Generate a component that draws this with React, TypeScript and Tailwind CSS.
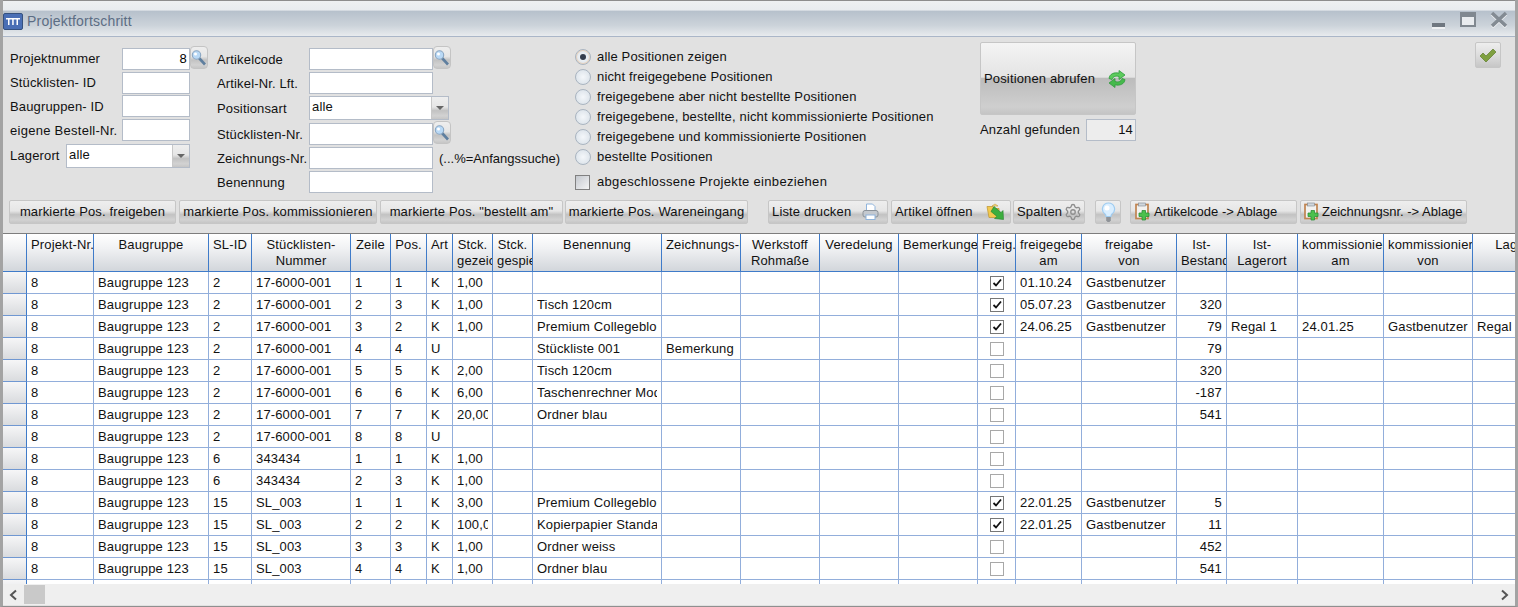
import { Settings } from 'lucide-react';

const font = 'font-["Liberation_Sans",Arial,sans-serif]';
const btnBg = 'bg-[linear-gradient(#eeeeee,#e6e6e6_45%,#c2c2c2_62%,#d2d2d2_85%,#c6c6c6)]';
const cols =
  'grid-cols-[24px_67px_115px_43px_99px_40px_36px_26px_40px_40px_129px_79px_79px_79px_79px_38px_66px_95px_50px_71px_86px_89px_95px]';

const headers = [
  '', 'Projekt-Nr.', 'Baugruppe', 'SL-ID', 'Stücklisten-\nNummer', 'Zeile', 'Pos.', 'Art', 'Stck.\ngezeichnet', 'Stck.\ngespielt',
  'Benennung', 'Zeichnungs-Nr.', 'Werkstoff\nRohmaße', 'Veredelung', 'Bemerkungen', 'Freig.', 'freigegeben\nam', 'freigabe\nvon',
  'Ist-\nBestand', 'Ist-\nLagerort', 'kommissioniert\nam', 'kommissioniert\nvon', 'Lagerort',
];

type Row = {
  sl: string; nr: string; z: string; p: string; art: string; st?: string; ben?: string; zn?: string;
  fr?: boolean; am?: string; von?: string; ist?: string; ort?: string; kam?: string; kvon?: string; lag?: string;
};

const g = 'Gastbenutzer';
const rows: Row[] = [
  { sl: '2', nr: '17-6000-001', z: '1', p: '1', art: 'K', st: '1,00', fr: true, am: '01.10.24', von: g },
  { sl: '2', nr: '17-6000-001', z: '2', p: '3', art: 'K', st: '1,00', ben: 'Tisch 120cm', fr: true, am: '05.07.23', von: g, ist: '320' },
  { sl: '2', nr: '17-6000-001', z: '3', p: '2', art: 'K', st: '1,00', ben: 'Premium Collegeblock', fr: true, am: '24.06.25', von: g, ist: '79', ort: 'Regal 1', kam: '24.01.25', kvon: g, lag: 'Regal 1' },
  { sl: '2', nr: '17-6000-001', z: '4', p: '4', art: 'U', ben: 'Stückliste 001', zn: 'Bemerkung', ist: '79' },
  { sl: '2', nr: '17-6000-001', z: '5', p: '5', art: 'K', st: '2,00', ben: 'Tisch 120cm', ist: '320' },
  { sl: '2', nr: '17-6000-001', z: '6', p: '6', art: 'K', st: '6,00', ben: 'Taschenrechner Modell', ist: '-187' },
  { sl: '2', nr: '17-6000-001', z: '7', p: '7', art: 'K', st: '20,00', ben: 'Ordner blau', ist: '541' },
  { sl: '2', nr: '17-6000-001', z: '8', p: '8', art: 'U' },
  { sl: '6', nr: '343434', z: '1', p: '1', art: 'K', st: '1,00' },
  { sl: '6', nr: '343434', z: '2', p: '3', art: 'K', st: '1,00' },
  { sl: '15', nr: 'SL_003', z: '1', p: '1', art: 'K', st: '3,00', ben: 'Premium Collegeblock', fr: true, am: '22.01.25', von: g, ist: '5' },
  { sl: '15', nr: 'SL_003', z: '2', p: '2', art: 'K', st: '100,00', ben: 'Kopierpapier Standard', fr: true, am: '22.01.25', von: g, ist: '11' },
  { sl: '15', nr: 'SL_003', z: '3', p: '3', art: 'K', st: '1,00', ben: 'Ordner weiss', ist: '452' },
  { sl: '15', nr: 'SL_003', z: '4', p: '4', art: 'K', st: '1,00', ben: 'Ordner blau', ist: '541' },
];

const Magnifier = () => (
  <svg width="16" height="18" viewBox="0 0 16 18">
    <line x1="8" y1="9" x2="14" y2="15.500" stroke="#5f7f9f" strokeWidth="2.6" />
    <circle cx="5.500" cy="6" r="4.200" fill="#b9d9f6" stroke="#8aa6c2" strokeWidth="1.100" />
    <circle cx="4.500" cy="5" r="1.500" fill="#ffffff" />
  </svg>
);

const SearchBtn = () => (
  <div className={`flex h-[23px] w-[18px] shrink-0 -translate-y-px items-center justify-center rounded-sm border border-[#c4c4c4] ${btnBg}`}>
    <Magnifier />
  </div>
);

const Input = ({ w, value, right }: { w: string; value?: string; right?: boolean }) => (
  <div className={`h-[22px] ${w} shrink-0 border border-[#b4bcc8] bg-white px-[2px] text-[13px] leading-[20px] text-black ${right ? 'text-right' : ''}`}>
    {value}
  </div>
);

const Combo = ({ w, value }: { w: string; value: string }) => (
  <div className={`flex h-[24px] ${w} shrink-0 border border-[#b4bcc8] bg-white`}>
    <div className="flex-1 px-[2px] text-[13px] leading-[20px]">{value}</div>
    <div className={`flex w-[17px] items-center justify-center border-l border-[#c8c8c8] ${btnBg}`}>
      <svg width="8" height="5" viewBox="0 0 8 5"><path d="M0 0h8L4 4z" fill="#666666" /></svg>
    </div>
  </div>
);

const Radio = ({ on, label }: { on?: boolean; label: string }) => (
  <div className="flex h-5 items-center">
    <div className={`flex h-4 w-4 items-center justify-center rounded-full border border-[#a9b4c0] bg-[radial-gradient(#f4f7fa,#d6dee6)] ${on ? 'ring-1 ring-[#e9d3bd] ring-inset' : ''}`}>
      {on && <div className="h-[6px] w-[6px] rounded-full bg-[#333c4c]" />}
    </div>
    <span className="ml-[6px]">{label}</span>
  </div>
);

const Btn = ({ w, className, children }: { w: string; className?: string; children: React.ReactNode }) => (
  <div className={`flex h-6 ${w} shrink-0 items-center whitespace-nowrap rounded-[2px] border border-[#c6c6c6] text-[13px] ${btnBg} ${className ?? ''}`}>
    {children}
  </div>
);

const Refresh = () => (
  <svg width="20" height="20" viewBox="0 0 20 20" className="ml-[12px] shrink-0">
    <path d="M2 9.500C2.500 5 7 3 12 4.200V1.500l6 4.500-6 4.500V7.500C8.500 6.500 6 7.500 5 10.500z" fill="#5ccb5c" stroke="#2f9a3c" strokeWidth="0.8" />
    <path d="M18 10.500C17.500 15 13 17 8 15.800v2.700l-6-4.500 6-4.500v3c3.500 1 6 0 7-3z" fill="#46b94c" stroke="#2f9a3c" strokeWidth="0.8" />
  </svg>
);

const Printer = () => (
  <svg width="17" height="18" viewBox="0 0 17 18" className="shrink-0">
    <path d="M4.500 1h6l2.500 2.500V8H4.500z" fill="#ffffff" stroke="#8fb4dc" />
    <rect x="1" y="7.500" width="15" height="6.500" rx="2" fill="#c4c9cf" stroke="#8b9299" />
    <rect x="4" y="12" width="9" height="4.500" fill="#ffffff" stroke="#8fb4dc" />
  </svg>
);

const FolderArrow = () => (
  <svg width="19" height="18" viewBox="0 0 19 18" className="shrink-0">
    <path d="M1 3.500h6l1 2h5v9H3z" fill="#f2c94e" stroke="#c29a3a" strokeWidth="0.8" />
    <path d="M6 3l3-2 3 2z" fill="#f6dd8a" stroke="#c29a3a" strokeWidth="0.6" />
    <path d="M8 3.500l7 6 2-2 .500 9-9-1 2.500-2-6-5z" fill="#3cae3e" stroke="#237f2c" strokeWidth="0.6" />
  </svg>
);

const Bulb = () => (
  <svg width="15" height="21" viewBox="0 0 15 21">
    <path d="M7.500 1a6 6 0 0 1 3.500 10.900c-.800.600-1 1.600-1 2.600H5c0-1-.200-2-1-2.600A6 6 0 0 1 7.500 1z" fill="#d9eeff" stroke="#9fccf0" strokeWidth="1.200" />
    <circle cx="6" cy="6" r="2.500" fill="#ffffff" />
    <path d="M5.200 15h4.600v3.500l-1.300 1.500h-2L5.200 18.500z" fill="#8f9398" />
  </svg>
);

const ClipPlus = () => (
  <svg width="17" height="20" viewBox="0 0 17 20" className="shrink-0">
    <rect x="1" y="2.500" width="12" height="14" fill="#f2f2f0" stroke="#c08450" strokeWidth="1.700" />
    <rect x="3.500" y="1" width="7" height="3" fill="#cfd6dc" stroke="#7f8790" strokeWidth="0.600" />
    <path d="M7 8.500h3.500V11H14v3.500h-3.500V18H7v-3.500H4V11h3z" fill="#4cc04c" stroke="#2f8f38" strokeWidth="0.800" />
  </svg>
);

const HeaderCell = ({ text }: { text: string }) => (
  <div className="h-full overflow-hidden border-r border-[#3f7bc9] bg-[linear-gradient(#ffffff,#f0f1f3_40%,#d2d6db)] pt-[3px]">
    {text.split('\n').map((line, i) => (
      <div key={i} className="w-max min-w-full whitespace-pre px-[4px] text-center leading-[16px]">
        {line}
      </div>
    ))}
  </div>
);

const Cell = ({ value, right }: { value?: string; right?: boolean }) => (
  <div className="h-full border-r border-b border-[#92aedb] pl-[4px] pr-[4px] leading-[21px]">
    <div className={`overflow-hidden whitespace-nowrap ${right ? 'text-right' : ''}`}>{value}</div>
  </div>
);

const Check = ({ on }: { on?: boolean }) => (
  <div className="flex h-full items-center justify-center border-r border-b border-[#92aedb]">
    <div className={`flex h-[14px] w-[14px] items-center justify-center bg-white border ${on ? 'border-[#777777]' : 'border-[#a8a8a8]'}`}>
      {on && (
        <svg width="10" height="10" viewBox="0 0 10 10">
          <path d="M1.500 5l2.500 2.500 5-6" fill="none" stroke="#111111" strokeWidth="1.800" />
        </svg>
      )}
    </div>
  </div>
);

const DataRow = ({ r }: { r?: Row }) => (
  <div className={`grid h-[22px] ${cols}`}>
    <div className="h-full border-r border-b border-r-[#3f7bc9] border-b-[#6f97d2] bg-[linear-gradient(#f6f6f7,#d9dbde)]" />
    <Cell value={r ? '8' : ''} />
    <Cell value={r ? 'Baugruppe 123' : ''} />
    <Cell value={r?.sl} />
    <Cell value={r?.nr} />
    <Cell value={r?.z} />
    <Cell value={r?.p} />
    <Cell value={r?.art} />
    <Cell value={r?.st} />
    <Cell />
    <Cell value={r?.ben} />
    <Cell value={r?.zn} />
    <Cell />
    <Cell />
    <Cell />
    {r ? <Check on={r.fr} /> : <Cell />}
    <Cell value={r?.am} />
    <Cell value={r?.von} />
    <Cell value={r?.ist} right />
    <Cell value={r?.ort} />
    <Cell value={r?.kam} />
    <Cell value={r?.kvon} />
    <Cell value={r?.lag} />
  </div>
);

export default function App() {
  return (
    <div className={`flex h-[607px] w-[1518px] flex-col overflow-hidden border-x-[3px] border-b border-x-[#a3a3a3] border-b-[#8f8f8f] bg-[#e1e1e1] text-[13px] tracking-[0.15px] text-[#111111] ${font}`}>
      {/* title bar */}
      <div className="-mx-[3px] flex h-[37px] shrink-0 items-center border-t border-b border-t-[#8d8d8d] border-b-[#aab6c8] bg-[linear-gradient(#eef0f2,#e9ecef_25%,#b7c1cc_30%,#ccd3da_70%,#e8ebee)] pt-[6px] pl-[3px] pr-[10px]">
        <svg width="20" height="17" viewBox="0 0 20 17" className="shrink-0">
          <rect x="0.500" y="0.500" width="19" height="16" rx="1.500" fill="#4a6fb5" stroke="#35517f" />
          <path d="M3 5h14v1.500H3zM5 6.500h1.500V12H5zM9.200 6.500h1.500V12H9.200zM13.500 6.500H15V12h-1.500z" fill="#ffffff" />
        </svg>
        <span className="ml-[4px] text-[14px] tracking-[0.2px] text-[#5c6d84]">Projektfortschritt</span>
        <div className="ml-auto flex items-center">
          <div className="mt-[8px] flex h-[6px] w-[13px] flex-col">
            <div className="h-[4px] bg-[#6f7780]" />
            <div className="h-[2px] bg-[#eef0f2]" />
          </div>
          <div className="ml-[15px] -translate-y-[2px] h-[15px] w-[16px] border-2 border-t-[5px] border-[#808890] bg-[#e9ecef]" />
          <svg width="18" height="17" viewBox="0 0 18 17" className="ml-[14px] -translate-y-[2px]">
            <path d="M2 2l14 13M16 2L2 15" stroke="#f0f2f4" strokeWidth="3.600" transform="translate(0 1)" />
            <path d="M2 2l14 13M16 2L2 15" stroke="#838b93" strokeWidth="3.600" />
          </svg>
        </div>
      </div>

      {/* filter form */}
      <div className="flex h-[164px] shrink-0 pl-[7px] pt-[5px]">
        <div className="w-[207px] shrink-0 pt-[5px]">
          <div className="flex items-center">
            <span className="w-[112px]">Projektnummer</span>
            <Input w="w-[68px]" value="8" right />
            <SearchBtn />
          </div>
          <div className="mt-[2px] flex items-center">
            <span className="w-[112px]">Stücklisten- ID</span>
            <Input w="w-[68px]" />
          </div>
          <div className="mt-px flex items-center">
            <span className="w-[112px] pt-[2px]">Baugruppen- ID</span>
            <Input w="w-[68px]" />
          </div>
          <div className="mt-[2px] flex items-center">
            <span className="w-[112px] pt-[2px] tracking-[0.27px]">eigene Bestell-Nr.</span>
            <Input w="w-[68px]" />
          </div>
          <div className="mt-[3px] flex items-center">
            <span className="w-[56px]">Lagerort</span>
            <Combo w="w-[124px]" value="alle" />
          </div>
        </div>

        <div className="w-[358px] shrink-0 pt-[5px]">
          <div className="flex items-center">
            <span className="w-[92px] pt-[2px]">Artikelcode</span>
            <Input w="w-[124px]" />
            <SearchBtn />
          </div>
          <div className="mt-[2px] flex items-center">
            <span className="w-[92px] pt-[2px]">Artikel-Nr. Lft.</span>
            <Input w="w-[124px]" />
          </div>
          <div className="mt-[2px] flex items-center">
            <span className="w-[92px] pt-[2px]">Positionsart</span>
            <Combo w="w-[140px]" value="alle" />
          </div>
          <div className="mt-[2px] flex items-center">
            <span className="w-[92px] pt-[2px]">Stücklisten-Nr.</span>
            <Input w="w-[124px]" />
            <SearchBtn />
          </div>
          <div className="mt-[2px] flex items-center">
            <span className="w-[92px] pt-[2px]">Zeichnungs-Nr.</span>
            <Input w="w-[124px]" />
            <span className="ml-[6px] pt-[2px] tracking-normal">(...%=Anfangssuche)</span>
          </div>
          <div className="mt-[2px] flex items-center">
            <span className="w-[92px] pt-[2px]">Benennung</span>
            <Input w="w-[124px]" />
          </div>
        </div>

        <div className="w-[405px] shrink-0 pt-[5px]">
          <Radio on label="alle Positionen zeigen" />
          <Radio label="nicht freigegebene Positionen" />
          <Radio label="freigegebene aber nicht bestellte Positionen" />
          <Radio label="freigegebene, bestellte, nicht kommissionierte Positionen" />
          <Radio label="freigegebene und kommissionierte Positionen" />
          <Radio label="bestellte Positionen" />
          <div className="mt-[5px] flex h-5 items-center">
            <div className="h-[15px] w-[15px] border border-[#808080] bg-[linear-gradient(135deg,#c4c8ce,#f4f4f4)] p-[1px]" />
            <span className="ml-[7px] tracking-[0.32px]">abgeschlossene Projekte einbeziehen</span>
          </div>
        </div>

        <div className="w-[156px] shrink-0">
          <div className="flex h-[73px] items-center rounded-[2px] border border-[#c6c6c6] bg-[linear-gradient(#f4f4f4,#e4e4e4_48%,#bcbcbc_50%,#cfcfcf_90%,#c4c4c4)] pl-[3px]">
            Positionen abrufen
            <Refresh />
          </div>
          <div className="mt-[4px] flex items-center justify-between">
            <span>Anzahl gefunden</span>
            <div className="h-[22px] w-[50px] border border-[#b4bcc8] bg-[#ededed] pr-[2px] text-right leading-[20px]">14</div>
          </div>
        </div>

        <div className="flex-1">
          <div className="ml-auto mr-[14px] flex h-[26px] w-[26px] items-center justify-center rounded-[2px] border border-[#c6c6c6] bg-[linear-gradient(#eeeeee,#dddddd_50%,#c6c6c6)]">
            <svg width="18" height="15" viewBox="0 0 18 15">
              <path d="M1 8l3-3 3 3 7-7 3 3-10 10z" fill="#7fa040" stroke="#5e7c2c" strokeWidth="0.700" />
            </svg>
          </div>
        </div>
      </div>

      {/* action buttons */}
      <div className="flex h-6 shrink-0 -translate-y-px pl-[6px]">
        <Btn w="w-[167px]" className="justify-center">markierte Pos. freigeben</Btn>
        <Btn w="w-[198px]" className="ml-[3px] justify-center">markierte Pos. kommissionieren</Btn>
        <Btn w="w-[183px]" className="ml-[3px] justify-center">markierte Pos. "bestellt am"</Btn>
        <Btn w="w-[183px]" className="ml-[2px] justify-center">markierte Pos. Wareneingang</Btn>
        <Btn w="w-[120px]" className="ml-[20px] gap-[11px] pl-[3px]">Liste drucken <Printer /></Btn>
        <Btn w="w-[120px]" className="ml-[3px] gap-[13px] pl-[3px]">Artikel öffnen <FolderArrow /></Btn>
        <Btn w="w-[72px]" className="ml-[2px] gap-[2px] pl-[3px]">Spalten <Settings size={18} strokeWidth={1.800} className="shrink-0 text-[#8e8e8e]" /></Btn>
        <Btn w="w-[26px]" className="ml-[10px] justify-center"><Bulb /></Btn>
        <Btn w="w-[167px]" className="ml-[9px] gap-[2px] pl-[4px] tracking-normal"><ClipPlus /> Artikelcode -&gt; Ablage</Btn>
        <Btn w="w-[167px]" className="ml-[3px] gap-[1px] pl-[3px] tracking-normal"><ClipPlus /> Zeichnungsnr. -&gt; Ablage</Btn>
      </div>

      {/* table */}
      <div className="mt-[8px] h-[351px] shrink-0 overflow-hidden border-t border-[#7d7d7d] bg-white">
        <div className={`grid h-[38px] border-b border-[#3f7bc9] ${cols}`}>
          {headers.map((h, i) => (
            <HeaderCell key={i} text={h} />
          ))}
        </div>
        {rows.map((r, i) => (
          <DataRow key={i} r={r} />
        ))}
        <DataRow />
      </div>

      {/* horizontal scroll bar */}
      <div className="flex h-[21px] shrink-0 items-center bg-[#efefef]">
        <svg width="21" height="12" viewBox="0 0 21 12" className="shrink-0">
          <path d="M13 1.500L8 6l5 4.500" fill="none" stroke="#555555" strokeWidth="2" />
        </svg>
        <div className="h-[19px] w-[21px] bg-[#c9c9c9]" />
        <svg width="12" height="12" viewBox="0 0 12 12" className="ml-auto mr-[4px] shrink-0">
          <path d="M3 1.500L8 6l-5 4.500" fill="none" stroke="#555555" strokeWidth="2" />
        </svg>
      </div>
    </div>
  );
}
